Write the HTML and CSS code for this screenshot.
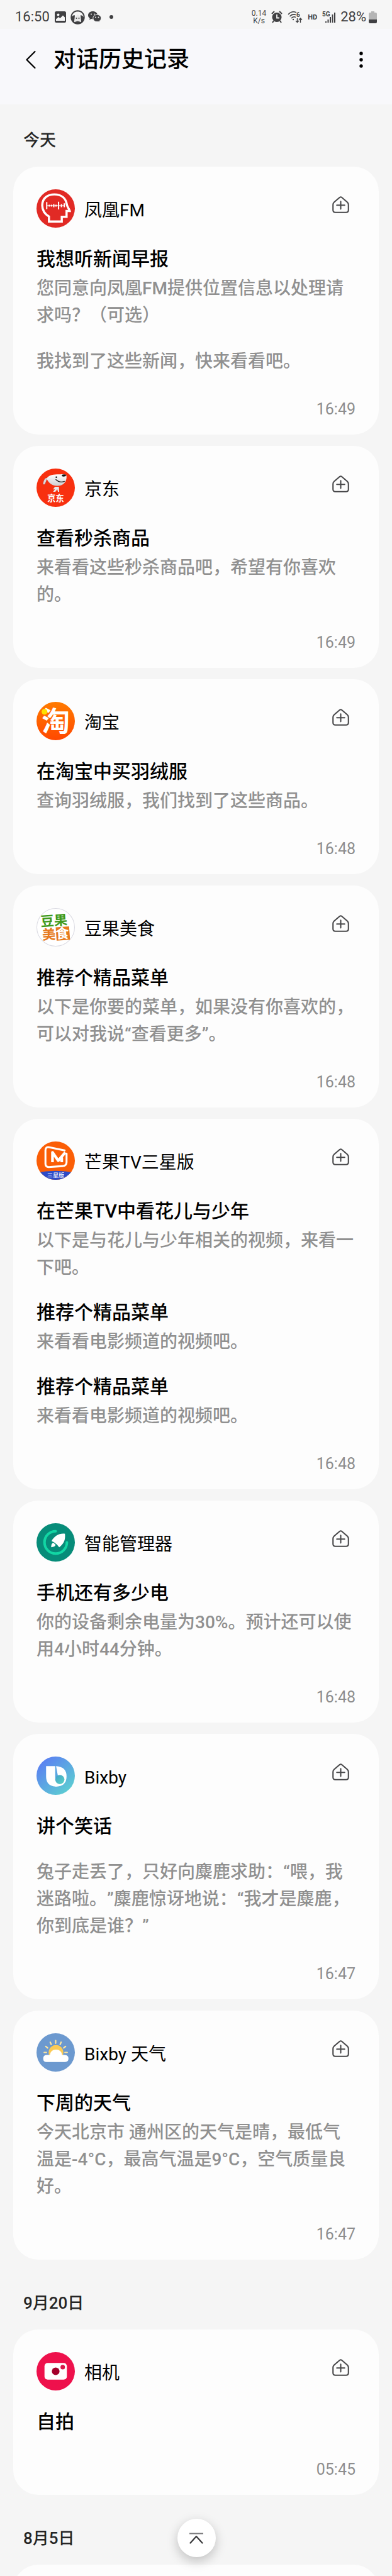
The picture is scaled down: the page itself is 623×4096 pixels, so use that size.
FILE: index.html
```html
<!DOCTYPE html>
<html lang="zh-CN">
<head>
    <meta charset="UTF-8">
    <meta name="viewport" content="width=device-width, initial-scale=1.0">
    <title>对话历史记录</title>
    <link rel="stylesheet" href="styles.css">
</head>
<body>
    <!-- Shared icons -->
    <svg class="sprite" aria-hidden="true">
        <symbol id="icon-home-add" viewBox="0 0 26 26">
            <path d="M11.3 1.9 2.9 9.2Q1.2 10.7 1.2 13v8.2Q1.2 24.8 4.8 24.8h16.4q3.6 0 3.6-3.6V13q0-2.3-1.7-3.8L14.7 1.9q-1.7-1.4-3.4 0Z"/>
            <path d="M13 8v11.600M7 13.800h12"/>
        </symbol>
    </svg>

    <div class="screen">
        <div class="status-bar">
            <span class="clock">16:50</span>
            <svg class="ic-image" width="18" height="18" viewBox="0 0 18 18">
                <rect width="18" height="18" rx="2.500" fill="#404042"/>
                <circle cx="5.500" cy="5.500" r="2" fill="#f6f6f6"/>
                <path d="M2 15v-2.500l4-3.500 2.500 2L13 6.500l3 3V15Z" fill="#f6f6f6"/>
            </svg>
            <svg class="ic-round" width="23" height="23" viewBox="0 0 23 23">
                <circle cx="11.500" cy="11.500" r="11.200" fill="#404042"/>
                <path d="M2 11C3 5 7 2.500 11.500 2.500S20 5 21 11c-2-2.500-4-3-5-2.500L17 19c-3-1-8-1-11 0L7 8.500C5 8 3 9 2 11Z" fill="#f6f6f6"/>
                <path d="M11.500 7 7.500 11l-1.500 8q2-2 5.500-2t5.500 2l-1.500-8Z" fill="#e8e8e8"/>
                <path d="M8 19q3.500-3 7 0-3 3-7 0Z" fill="#404042"/>
                <circle cx="9.500" cy="13" r="1" fill="#404042"/>
                <circle cx="13.500" cy="13" r="1" fill="#404042"/>
            </svg>
            <svg class="ic-chat" width="21" height="18" viewBox="0 0 21 18">
                <path d="M7.500 0C3.300 0 0 2.700 0 6.200c0 2 1 3.600 2.700 4.800L2 13.500l3-1.500 2.500.4C11.700 12.400 15 9.700 15 6.200S11.700 0 7.500 0Z" fill="#404042"/>
                <path d="M14.300 5.300c-3.700 0-6.500 2.600-6.500 5.600s2.800 5.600 6.500 5.600l2-.3 2.500 1.300-.6-2.200c1.500-1 2.600-2.600 2.600-4.400 0-3-2.900-5.600-6.500-5.600Z" fill="#404042" stroke="#f6f6f6"/>
                <circle cx="5" cy="4.500" r="1" fill="#f6f6f6"/>
                <circle cx="10" cy="4.500" r="1" fill="#f6f6f6"/>
                <circle cx="12" cy="9.500" r="1" fill="#f6f6f6"/>
                <circle cx="16.500" cy="9.500" r="1" fill="#f6f6f6"/>
            </svg>
            <span class="more-dot"></span>

            <div class="status-right">
                <span class="speed">0.14<br>K/s</span>
                <svg width="18" height="20" viewBox="0 0 18 20">
                    <circle cx="9" cy="10.500" r="7.500" fill="#404042"/>
                    <path d="M1 5 5 1M17 5l-4-4M4 16l-2 3M14 16l2 3" stroke="#404042" stroke-width="2" fill="none"/>
                    <path d="M9 6v5.500h4" stroke="#f6f6f6" stroke-width="1.800" fill="none"/>
                </svg>
                <svg width="24" height="20" viewBox="0 0 24 20">
                    <path d="M1 6Q7-.5 14 3M3.500 9Q8 4.500 13 6.500M6 12q3.500-3.500 7-1.500" stroke="#404042" stroke-width="1.600" fill="none"/>
                    <circle cx="9" cy="14" r="1.200" fill="#404042"/>
                    <text x="14" y="10" class="wifi-num">6</text>
                    <path d="M15.500 12v6.500m-2.500-2.500 2.500 2.500 2.500-2.500M20.500 19v-7m-2.500 2.500 2.500-2.500 2.500 2.500" stroke="#404042" stroke-width="1.400" fill="none"/>
                </svg>
                <span class="hd">HD</span>
                <svg width="21" height="20" viewBox="0 0 21 20">
                    <text x="0" y="9" class="net-type">5G</text>
                    <path d="M6 17v2M9.500 14v5M13 10v9M16.500 6v13M20 3v16" stroke="#404042" stroke-width="2"/>
                </svg>
                <span class="percent">28%</span>
                <svg class="battery" width="13" height="19" viewBox="0 0 13 19">
                    <path d="M4 0h5v2h2q2 0 2 2v9H0V4q0-2 2-2h2Z" fill="#b5b5b5"/>
                    <path d="M0 13h13v4q0 2-2 2H2q-2 0-2-2Z" fill="#404042"/>
                </svg>
            </div>
        </div>

        <header class="header">
            <button type="button" class="icon-btn" aria-label="返回">
                <svg width="18" height="30" viewBox="0 0 18 30"><path d="M15.500 2 2.500 15l13 13" fill="none" stroke="#000" stroke-width="2.200" stroke-linecap="round" stroke-linejoin="round"/></svg>
            </button>
            <h1>对话历史记录</h1>
            <button type="button" class="icon-btn" aria-label="更多选项">
                <svg width="6" height="26" viewBox="0 0 6 26"><circle cx="3" cy="3" r="2.700"/><circle cx="3" cy="13" r="2.700"/><circle cx="3" cy="23" r="2.700"/></svg>
            </button>
        </header>

        <main>
            <section class="day">
                <h2 class="day-title">今天</h2>

                <article class="card">
                    <div class="card-head">
                        <svg class="app-icon" viewBox="0 0 60 60">
                            <circle cx="30" cy="30" r="30" fill="#e12a25"/>
                            <path d="M19.500 50.500v-8C12 38 9 31 9 25 9 14 17 8 28 8c12 0 18 7 19.500 16 .5 4 4 7 4.500 10h-5v9h-7.500v7.500Z" fill="none" stroke="#fff" stroke-width="3.400"/>
                            <path d="M16 20v11M20 24v3M23.500 24v3M27 23v5M30.500 24v3M34.500 19.500v12M39 23v5M43.500 22v6" stroke="#fff" stroke-width="2"/>
                            <path d="M16 25.500h28" stroke="#fff"/>
                        </svg>
                        <span class="app-name">凤凰FM</span>
                        <button type="button" class="add-btn" aria-label="添加到主屏幕"><svg><use href="#icon-home-add"/></svg></button>
                    </div>
                    <h3>我想听新闻早报</h3>
                    <p>您同意向凤凰FM提供位置信息以处理请求吗？（可选）</p>
                    <p class="later">我找到了这些新闻，快来看看吧。</p>
                    <time>16:49</time>
                </article>

                <article class="card">
                    <div class="card-head">
                        <svg class="app-icon" viewBox="0 0 60 60">
                            <defs><linearGradient id="dog" x1="0" y1="0" x2="0" y2="1"><stop offset="0" stop-color="#fff"/><stop offset="1" stop-color="#cfcfd2"/></linearGradient></defs>
                            <circle cx="30" cy="30" r="30" fill="#f8300f"/>
                            <path d="M18 15c-4-2-7 2-8 9 1 2 3 1 4-1l2-5Z" fill="#dcdcde" stroke="#b8281a" stroke-width=".6"/>
                            <path d="M18 13c4-4 12-4 20-4 6-.5 9 .5 9 4 0 8-5 14-14 14-9 .5-14-5-16-9-1-2-.500-4 1-5Z" fill="url(#dog)"/>
                            <path d="M40 9.500q5-1 6.500 1-1 2.500-5 2-3-1-1.500-3Z" fill="#111"/>
                            <circle cx="31" cy="13.500" r="1.200" fill="#111"/>
                            <path d="M30 17q6 6 14 3" fill="none" stroke="#111" stroke-width="1.300"/>
                            <path d="M29 28.500h6l.5 8h-2l-1-4-3 4h-3.500l3-4.500-3 1q1-3 3-4.500Z" fill="#e9e9ea"/>
                            <text x="30" y="51" class="jd-text">京东</text>
                        </svg>
                        <span class="app-name">京东</span>
                        <button type="button" class="add-btn" aria-label="添加到主屏幕"><svg><use href="#icon-home-add"/></svg></button>
                    </div>
                    <h3>查看秒杀商品</h3>
                    <p>来看看这些秒杀商品吧，希望有你喜欢的。</p>
                    <time>16:49</time>
                </article>

                <article class="card">
                    <div class="card-head">
                        <svg class="app-icon" viewBox="0 0 60 60">
                            <defs><linearGradient id="tao" x1="0" y1="0" x2="0" y2="1"><stop offset="0" stop-color="#ff7b00"/><stop offset="1" stop-color="#ff4800"/></linearGradient></defs>
                            <circle cx="30" cy="30" r="30" fill="url(#tao)"/>
                            <text x="30" y="46" class="tao-text">淘</text>
                            <circle cx="12.500" cy="15.500" r="4.500" fill="#ffe000"/>
                        </svg>
                        <span class="app-name">淘宝</span>
                        <button type="button" class="add-btn" aria-label="添加到主屏幕"><svg><use href="#icon-home-add"/></svg></button>
                    </div>
                    <h3>在淘宝中买羽绒服</h3>
                    <p>查询羽绒服，我们找到了这些商品。</p>
                    <time>16:48</time>
                </article>

                <article class="card">
                    <div class="card-head">
                        <svg class="app-icon" viewBox="0 0 60 60">
                            <circle cx="30" cy="30" r="29.500" fill="#fff" stroke="#dadae2"/>
                            <g transform="rotate(-4 30 30)">
                                <text x="7" y="27" class="dou-text" fill="#3f9a1c">豆果</text>
                                <rect x="30" y="30" width="21" height="21" fill="#e67a1e"/>
                                <text x="8" y="48" class="dou-text" fill="#e67a1e">美<tspan fill="#fff">食</tspan></text>
                            </g>
                        </svg>
                        <span class="app-name">豆果美食</span>
                        <button type="button" class="add-btn" aria-label="添加到主屏幕"><svg><use href="#icon-home-add"/></svg></button>
                    </div>
                    <h3>推荐个精品菜单</h3>
                    <p>以下是你要的菜单，如果没有你喜欢的，可以对我说“查看更多”。</p>
                    <time>16:48</time>
                </article>

                <article class="card">
                    <div class="card-head">
                        <svg class="app-icon" viewBox="0 0 60 60">
                            <defs><clipPath id="disc"><circle cx="30" cy="30" r="30"/></clipPath></defs>
                            <g clip-path="url(#disc)">
                                <rect width="60" height="60" fill="#fb5e06"/>
                                <path d="M0 49Q30 43 60 49V60H0Z" fill="#2c4bc8"/>
                            </g>
                            <path d="M44 14 20 9q-6-1-6 5v21q0 5 5 5l22-1.500q6-.5 6-6V19" fill="none" stroke="#fff" stroke-width="3" stroke-linecap="round" stroke-linejoin="round"/>
                            <path d="M25 32.500V17l9 13L45 17M39.500 25v7.500" fill="none" stroke="#fff" stroke-width="4.200" stroke-linejoin="round"/>
                            <text x="30" y="56" class="mg-text">三星版</text>
                        </svg>
                        <span class="app-name">芒果TV三星版</span>
                        <button type="button" class="add-btn" aria-label="添加到主屏幕"><svg><use href="#icon-home-add"/></svg></button>
                    </div>
                    <h3>在芒果TV中看花儿与少年</h3>
                    <p>以下是与花儿与少年相关的视频，来看一下吧。</p>
                    <h3>推荐个精品菜单</h3>
                    <p>来看看电影频道的视频吧。</p>
                    <h3>推荐个精品菜单</h3>
                    <p>来看看电影频道的视频吧。</p>
                    <time>16:48</time>
                </article>

                <article class="card">
                    <div class="card-head">
                        <svg class="app-icon" viewBox="0 0 60 60">
                            <circle cx="30" cy="30" r="30" fill="#078c79"/>
                            <path d="M30 12.500A17.500 17.500 0 1 0 47.500 30" fill="none" stroke="#12d6a4" stroke-width="4" stroke-linecap="round"/>
                            <path d="M44.500 16.500c-9-1-16 3-21 11.500l3.500 1.500 5 4 3.500 4c7-5 10-11 9-21Z" fill="#fff"/>
                            <path d="M26.500 30.500c-3 1-3.500 3.500-3.500 7 3 0 6-1 7-3.500Z" fill="#fff"/>
                        </svg>
                        <span class="app-name">智能管理器</span>
                        <button type="button" class="add-btn" aria-label="添加到主屏幕"><svg><use href="#icon-home-add"/></svg></button>
                    </div>
                    <h3>手机还有多少电</h3>
                    <p>你的设备剩余电量为30%。预计还可以使用4小时44分钟。</p>
                    <time>16:48</time>
                </article>

                <article class="card">
                    <div class="card-head">
                        <svg class="app-icon" viewBox="0 0 60 60">
                            <defs>
                                <linearGradient id="bix" x1=".15" y1=".1" x2=".85" y2=".9"><stop offset="0" stop-color="#5b80f2"/><stop offset="1" stop-color="#5ccdd2"/></linearGradient>
                                <linearGradient id="bix-dot" x1="0" y1="0" x2="1" y2="1"><stop offset="0" stop-color="#3f9fc8"/><stop offset="1" stop-color="#5ed6c4"/></linearGradient>
                            </defs>
                            <circle cx="30" cy="30" r="30" fill="url(#bix)"/>
                            <path d="M15 15h14.500v16q0 10 8 12-3 4-8 4Q15 46 15 31Z" fill="#fff"/>
                            <path d="M30.500 15Q47 16 47 31q0 16-17 16l-6-5 12 1Z" fill="#fff"/>
                            <circle cx="36.500" cy="36" r="7.200" fill="url(#bix-dot)"/>
                            <path d="M29.300 15h1.300v20h-1.300Z" fill="#54a5e0"/>
                        </svg>
                        <span class="app-name">Bixby</span>
                        <button type="button" class="add-btn" aria-label="添加到主屏幕"><svg><use href="#icon-home-add"/></svg></button>
                    </div>
                    <h3>讲个笑话</h3>
                    <p class="story">兔子走丢了，只好向麋鹿求助：“喂，我迷路啦。”麋鹿惊讶地说：“我才是麋鹿，你到底是谁？”</p>
                    <time>16:47</time>
                </article>

                <article class="card">
                    <div class="card-head">
                        <svg class="app-icon" viewBox="0 0 60 60">
                            <circle cx="30" cy="30" r="30" fill="#6c99cf"/>
                            <path d="M30 11.500v4M21.500 14l1.500 3.500M38.500 14 37 17.500M14.500 20.500l3 2.500M45.500 20.500l-3 2.500M12 30h3.500M48 30h-3.500" stroke="#fde6a0" stroke-width="2.200" stroke-linecap="round"/>
                            <circle cx="30.500" cy="30" r="11.500" fill="#fccb55"/>
                            <path d="M16 34h5q1-8.500 9.500-8.500T40 34h4.500q5.500.5 5.500 5.500T44.500 45H16q-5.500 0-5.500-5.500T16 34Z" fill="#fff"/>
                        </svg>
                        <span class="app-name">Bixby 天气</span>
                        <button type="button" class="add-btn" aria-label="添加到主屏幕"><svg><use href="#icon-home-add"/></svg></button>
                    </div>
                    <h3>下周的天气</h3>
                    <p>今天北京市 通州区的天气是晴，最低气温是-4°C，最高气温是9°C，空气质量良好。</p>
                    <time>16:47</time>
                </article>
            </section>

            <section class="day">
                <h2 class="day-title">9月20日</h2>

                <article class="card">
                    <div class="card-head">
                        <svg class="app-icon" viewBox="0 0 60 60">
                            <circle cx="30" cy="30" r="30" fill="#ee114c"/>
                            <rect x="12.500" y="17" width="35" height="26" rx="5" fill="#fff"/>
                            <circle cx="30" cy="30" r="6" fill="#a3002b"/>
                            <circle cx="41" cy="23.500" r="3.500" fill="#d8174a"/>
                        </svg>
                        <span class="app-name">相机</span>
                        <button type="button" class="add-btn" aria-label="添加到主屏幕"><svg><use href="#icon-home-add"/></svg></button>
                    </div>
                    <h3>自拍</h3>
                    <time>05:45</time>
                </article>
            </section>

            <section class="day">
                <h2 class="day-title">8月5日</h2>
                <article class="card"></article>
            </section>
        </main>

        <button type="button" class="to-top" aria-label="回到顶部">
            <svg width="22" height="18" viewBox="0 0 22 18"><path d="M0 1.500h22" stroke="#7c7c7e" stroke-width="2"/><path d="M1.500 16.500 11 6l9.500 10.500" fill="none" stroke="#3a3a3c" stroke-width="2.200" stroke-linecap="round" stroke-linejoin="round"/></svg>
        </button>
    </div>
</body>
</html>
```

FILE: styles.css
```css
* {
    margin: 0;
    padding: 0;
    box-sizing: border-box;
}

body {
    background: #f5f5f5;
    color: #000;
    font-family: Roboto, "Noto Sans CJK SC", sans-serif;
    text-spacing-trim: space-all;
}

button {
    display: flex;
    align-items: center;
    justify-content: center;
    background: none;
    border: none;
    cursor: pointer;
}

.sprite {
    display: none;
}

.screen {
    height: 100vh;
    overflow: hidden;
}

/* Status bar */
.status-bar {
    display: flex;
    align-items: center;
    height: 46px;
    padding: 8px 24px 0;
    background: #f6f6f6;
    color: #404042;
}

.clock,
.percent {
    font-size: 22px;
    line-height: 24px;
}

.ic-image {
    margin-left: 8px;
}

.ic-round {
    margin-left: 7px;
}

.ic-chat {
    margin-left: 5px;
}

.more-dot {
    width: 6px;
    height: 6px;
    margin-left: 13px;
    border-radius: 50%;
    background: #404042;
}

.status-right {
    display: flex;
    align-items: center;
    gap: 8px;
    margin-left: auto;
}

.speed {
    font-size: 12px;
    line-height: 12px;
    text-align: center;
}

.hd {
    font-size: 11px;
    font-weight: 700;
}

.wifi-num,
.net-type {
    font-size: 10px;
    font-weight: 700;
    fill: #404042;
}

.battery {
    margin-left: -4px;
}

/* Header */
.header {
    display: flex;
    align-items: center;
    height: 120px;
    padding: 0 33px;
    padding-bottom: 22px;
    background: #f8f8fb;
}

.header h1 {
    flex: 1;
    margin-left: 20px;
    font-size: 36px;
    font-weight: 500;
    line-height: 48px;
}

.icon-btn {
    min-width: 32px;
    height: 48px;
}

/* History list */
main {
    padding: 42px 21px 0;
}

.day + .day {
    margin-top: 54px;
}

.day-title {
    margin-bottom: 27px;
    padding-left: 16px;
    color: #252525;
    font-size: 26px;
    font-weight: 500;
    line-height: 30px;
}

.card {
    min-height: 263px;
    padding: 36px 37px 24px;
    border-radius: 40px;
    background: #fdfdfd;
}

.card + .card {
    margin-top: 18px;
}

.card-head {
    display: flex;
    align-items: center;
    height: 61px;
    margin-bottom: 29px;
}

.app-icon {
    width: 61px;
    height: 61px;
}

.app-name {
    flex: 1;
    padding-top: 6px;
    margin-left: 15px;
    font-size: 28px;
    line-height: 36px;
}

.add-btn {
    width: 44px;
    height: 44px;
    margin-right: 2px;
    margin-bottom: 12px;
}

.add-btn svg {
    width: 27px;
    height: 27px;
    fill: none;
    stroke: #48484a;
    stroke-width: 2;
    stroke-linecap: round;
}

.card h3 {
    font-size: 30px;
    font-weight: 500;
    line-height: 42px;
}

.card p {
    margin-top: 4px;
    color: #909090;
    font-size: 28px;
    font-weight: 500;
    line-height: 43px;
}

.card p + h3 {
    margin-top: 29px;
}

.card .later,
.card .story {
    margin-top: 30px;
}

.card time {
    display: block;
    margin-top: 39px;
    color: #8e8e8e;
    font-size: 25px;
    line-height: 32px;
    text-align: right;
}

/* Lettering inside app icons */
.jd-text,
.tao-text,
.mg-text {
    fill: #fff;
    font-weight: 700;
    text-anchor: middle;
}

.jd-text {
    font-size: 13px;
}

.tao-text {
    font-size: 44px;
}

.mg-text {
    font-size: 9px;
    font-weight: 400;
}

.dou-text {
    font-size: 21px;
    font-weight: 700;
}

/* Back to top */
.to-top {
    position: fixed;
    bottom: 30px;
    left: 50%;
    width: 61px;
    height: 61px;
    margin-left: -30px;
    border-radius: 50%;
    background: #fff;
    box-shadow: 0 6px 18px rgba(0, 0, 0, 0.22);
}
```
